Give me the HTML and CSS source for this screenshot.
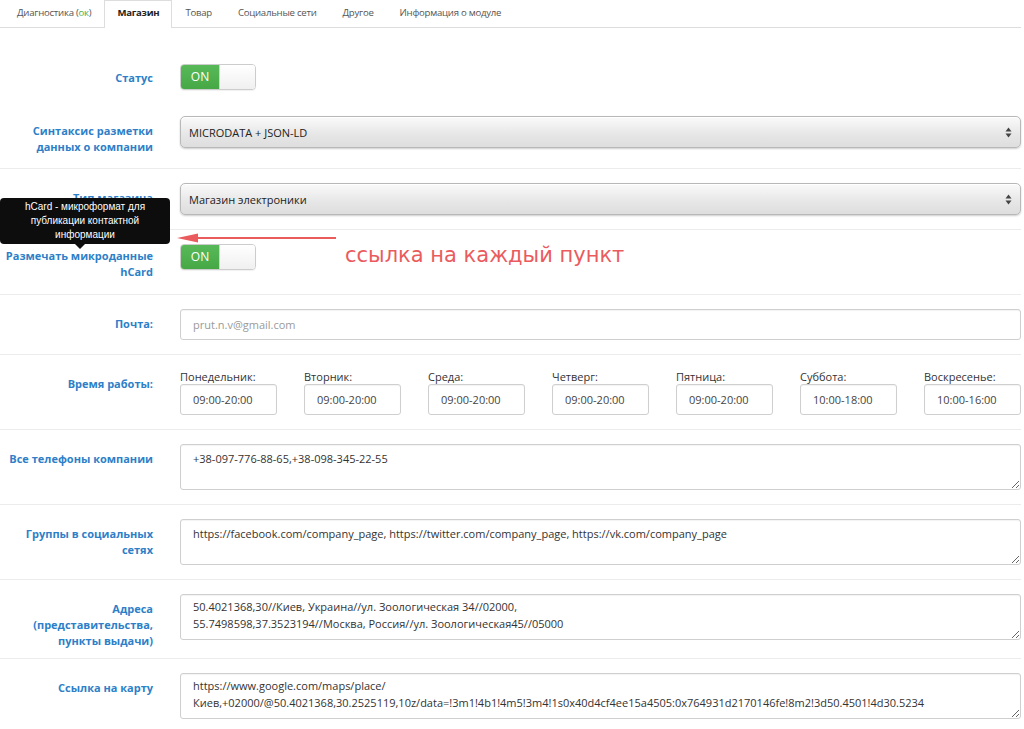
FILE: index.html
```html
<!DOCTYPE html>
<html lang="ru">
<head>
<meta charset="utf-8">
<title>Магазин</title>
<link rel="stylesheet" href="styles.css">
</head>
<body>
<div class="page">
  <ul class="tabs">
    <li class="tab">Диагностика (<span class="ok">ок</span>)</li>
    <li class="tab active">Магазин</li>
    <li class="tab">Товар</li>
    <li class="tab">Социальные сети</li>
    <li class="tab">Другое</li>
    <li class="tab">Информация о модуле</li>
  </ul>

  <form class="form">
    <div class="row row-first">
      <label class="label lbl-toggle">Статус</label>
      <div class="control">
        <div class="toggle"><span class="toggle-on">ON</span><span class="toggle-off"></span></div>
      </div>
    </div>

    <div class="row row-noborder">
      <label class="label">Синтаксис разметки данных о компании</label>
      <div class="control">
        <div class="select-wrap">
          <select class="select"><option>MICRODATA + JSON-LD</option></select>
          <svg class="select-arrows" width="7" height="11" viewBox="0 0 7 11"><path d="M3.5 0.5 L6.5 4.5 H0.5 Z M3.5 10.5 L6.5 6.5 H0.5 Z" fill="#444"/></svg>
        </div>
      </div>
    </div>

    <div class="row">
      <label class="label">Тип магазина</label>
      <div class="control">
        <div class="select-wrap">
          <select class="select"><option>Магазин электроники</option></select>
          <svg class="select-arrows" width="7" height="11" viewBox="0 0 7 11"><path d="M3.5 0.5 L6.5 4.5 H0.5 Z M3.5 10.5 L6.5 6.5 H0.5 Z" fill="#444"/></svg>
        </div>
      </div>
    </div>

    <div class="row row-hcard">
      <label class="label lbl-toggle2">Размечать микроданные hCard</label>
      <div class="control">
        <div class="toggle"><span class="toggle-on">ON</span><span class="toggle-off"></span></div>
      </div>
      <div class="tooltip">hCard - микроформат для публикации контактной информации<span class="tooltip-arrow"></span></div>
      <svg class="red-arrow" width="162" height="14" viewBox="0 0 162 14"><line x1="10" y1="7" x2="160" y2="7" stroke="#ea5b5e" stroke-width="2"/><path d="M1 7 L22 2.5 L22 11.5 Z" fill="#ea5b5e"/></svg>
      <div class="note">ссылка на каждый пункт</div>
    </div>

    <div class="row">
      <label class="label">Почта:</label>
      <div class="control">
        <input class="input input-muted" type="text" value="prut.n.v@gmail.com">
      </div>
    </div>

    <div class="row">
      <label class="label lbl-days">Время работы:</label>
      <div class="control days">
        <div class="day"><div class="day-name">Понедельник:</div><input class="input" type="text" value="09:00-20:00"></div>
        <div class="day"><div class="day-name">Вторник:</div><input class="input" type="text" value="09:00-20:00"></div>
        <div class="day"><div class="day-name">Среда:</div><input class="input" type="text" value="09:00-20:00"></div>
        <div class="day"><div class="day-name">Четверг:</div><input class="input" type="text" value="09:00-20:00"></div>
        <div class="day"><div class="day-name">Пятница:</div><input class="input" type="text" value="09:00-20:00"></div>
        <div class="day"><div class="day-name">Суббота:</div><input class="input" type="text" value="10:00-18:00"></div>
        <div class="day"><div class="day-name">Воскресенье:</div><input class="input" type="text" value="10:00-16:00"></div>
      </div>
    </div>

    <div class="row">
      <label class="label">Все телефоны компании</label>
      <div class="control">
        <textarea class="textarea">+38-097-776-88-65,+38-098-345-22-55</textarea>
      </div>
    </div>

    <div class="row">
      <label class="label">Группы в социальных сетях</label>
      <div class="control">
        <textarea class="textarea">https://facebook.com/company_page, https://twitter.com/company_page, https://vk.com/company_page</textarea>
      </div>
    </div>

    <div class="row row-tall">
      <label class="label">Адреса (представительства, пункты выдачи)</label>
      <div class="control">
        <textarea class="textarea textarea-2">50.4021368,30//Киев, Украина//ул. Зоологическая 34//02000,
55.7498598,37.3523194//Москва, Россия//ул. Зоологическая45//05000</textarea>
      </div>
    </div>

    <div class="row">
      <label class="label">Ссылка на карту</label>
      <div class="control">
        <textarea class="textarea textarea-2">https://www.google.com/maps/place/
Киев,+02000/@50.4021368,30.2525119,10z/data=!3m1!4b1!4m5!3m4!1s0x40d4cf4ee15a4505:0x764931d2170146fe!8m2!3d50.4501!4d30.5234</textarea>
      </div>
    </div>
  </form>
</div>
</body>
</html>
```
FILE: styles.css
```css
* { box-sizing: border-box; }
html, body { margin: 0; padding: 0; background: #fff; }
body {
  font-family: "Open Sans", "Noto Sans", sans-serif;
  font-size: 11px;
  color: #333;
}
.page { padding: 0 3px 0 0; overflow: hidden; height: 729px; }

.tabs {
  list-style: none;
  margin: 0;
  padding: 0 0 0 4px;
  display: flex;
  border-bottom: 1px solid #ddd;
  height: 28px;
}
.tab {
  padding: 0 12px;
  line-height: 23px;
  height: 28px;
  font-size: 9.6px;
  letter-spacing: -0.25px;
  color: #555;
  margin-right: 0;
  border: 1px solid transparent;
  border-bottom: none;
  white-space: nowrap;
}
.tab.active {
  color: #222;
  font-weight: 700;
  background: #fff;
  border-color: #ddd;
  box-shadow: 0 1px 0 #fff;
}
.ok { color: #4caf50; }

.form { margin-top: 22px; }
.row {
  position: relative;
  display: grid;
  grid-template-columns: 165px 1fr;
  column-gap: 15px;
  padding: 14px 0;
  border-top: 1px solid #ececec;
}
.row-first { border-top: none; padding-top: 14px; padding-bottom: 13px; }
.row-noborder { border-top: none; padding-top: 13px; padding-bottom: 13px; }
.row-tall { padding-bottom: 9px; }
.label {
  display: block;
  color: #2d7fc8;
  font-weight: 700;
  text-align: right;
  padding: 7px 12px 0 0;
  line-height: 16px;
}
.lbl-toggle { padding-top: 6px; }
.lbl-toggle2 { padding-top: 4px; }
.lbl-days { padding-top: 7px; }
.control { min-width: 0; }

.toggle {
  width: 76px;
  height: 26px;
  display: flex;
  border: 1px solid #ccc;
  border-radius: 4px;
  overflow: hidden;
  box-shadow: 0 1px 1px rgba(0,0,0,0.06);
}
.toggle-on {
  width: 38px;
  background: linear-gradient(#58b958, #45a845);
  color: #fff;
  font-size: 12px;
  line-height: 24px;
  text-align: center;
}
.toggle-off {
  flex: 1;
  background: linear-gradient(#ffffff, #f0f0f0);
  border-left: 1px solid #d4d4d4;
}

.select-wrap { position: relative; }
.select {
  appearance: none;
  -webkit-appearance: none;
  width: 100%;
  height: 32px;
  font: inherit;
  font-size: 11px;
  color: #222;
  padding: 0 8px;
  border: 1px solid #b8b8b8;
  border-radius: 5px;
  background: linear-gradient(#fafafa, #e6e6e6 60%, #dedede);
  box-shadow: 0 1px 2px rgba(0,0,0,0.2), inset 0 1px 0 #fff;
  outline: none;
}
.select-arrows { position: absolute; right: 9px; top: 11px; }

.input {
  display: block;
  width: 100%;
  height: 31px;
  font: inherit;
  font-size: 11px;
  color: #444;
  padding: 0 12px;
  border: 1px solid #cfcfcf;
  border-radius: 3px;
  background: #fff;
  box-shadow: inset 0 1px 1px rgba(0,0,0,0.05);
  outline: none;
}
.input-muted { color: #9a9a9a; }

.days {
  display: grid;
  grid-template-columns: repeat(7, 97px);
  column-gap: 27px;
}
.day-name { line-height: 15px; color: #333; white-space: nowrap; }

.textarea {
  display: block;
  width: 100%;
  height: 46px;
  font: inherit;
  font-size: 11px;
  line-height: 17px;
  color: #333;
  padding: 5px 12px 4px;
  border: 1px solid #cfcfcf;
  border-radius: 3px;
  box-shadow: inset 0 1px 1px rgba(0,0,0,0.05);
  resize: vertical;
  overflow: hidden;
  outline: none;
  white-space: pre-wrap;
}
.textarea-2 { padding-top: 3px; }

.tooltip {
  position: absolute;
  left: 0;
  top: -32px;
  width: 170px;
  height: 46px;
  background: #0d0d0d;
  border-radius: 4px;
  color: #fff;
  font-family: "Liberation Sans", Arial, sans-serif;
  font-size: 10px;
  line-height: 14px;
  text-align: center;
  padding: 2px 22px 0;
}
.tooltip-arrow {
  position: absolute;
  left: 75px;
  bottom: -5px;
  width: 0; height: 0;
  border-left: 5px solid transparent;
  border-right: 5px solid transparent;
  border-top: 5px solid #0d0d0d;
}
.red-arrow { position: absolute; left: 176px; top: 1px; }
.note {
  position: absolute;
  left: 345px;
  top: 12px;
  color: #ea5b5e;
  font-family: "DejaVu Sans", Verdana, sans-serif;
  font-size: 21px;
  line-height: 26px;
  white-space: nowrap;
}
```
